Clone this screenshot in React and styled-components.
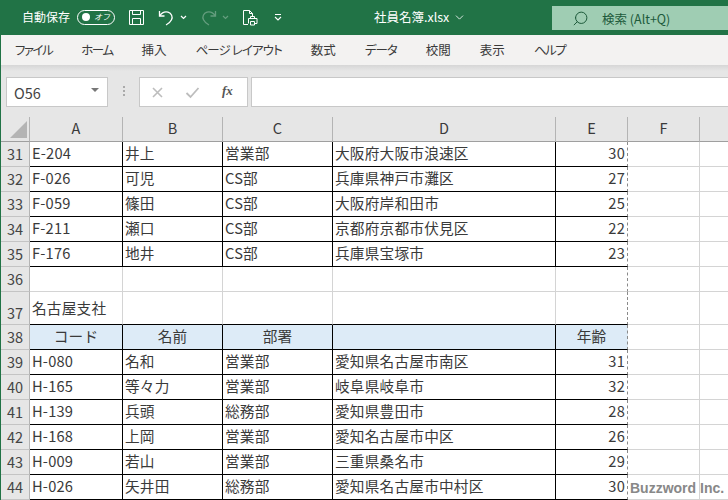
import React from 'react';
import styled, { createGlobalStyle } from 'styled-components';
import { Search, ChevronDown } from 'lucide-react';

const Global = createGlobalStyle`
  html, body { margin: 0; padding: 0; background: #fff; }
  body { font-family: "Noto Sans CJK JP", "Liberation Sans", sans-serif; color: #222; }
`;

const Page = styled.div`
  width: 728px;
  height: 500px;
  overflow: hidden;
  position: relative;
  display: flex;
  flex-direction: column;
`;

const TitleBar = styled.div`
  height: 35px;
  flex: none;
  background: #217346;
  color: #fff;
  display: flex;
  align-items: center;
  padding-left: 22px;
`;

const AutoSave = styled.span`
  font-size: 12px;
  line-height: 16px;
  margin-top: -1px;
`;

const Toggle = styled.span`
  width: 38px;
  height: 15px;
  box-sizing: border-box;
  margin-left: 7px;
  margin-top: -1px;
  border: 1px solid #fff;
  border-radius: 8px;
  display: flex;
  align-items: center;
  padding-left: 4px;
  gap: 4px;
  &::before {
    content: "";
    width: 8px;
    height: 8px;
    background: #fff;
    border-radius: 50%;
  }
`;

const ToggleText = styled.span`
  font-size: 8px;
  line-height: 10px;
  font-style: italic;
`;

const QatIcon = styled.svg`
  flex: none;
  margin-left: ${p => p.$left}px;
  margin-top: -1px;
  opacity: ${p => p.$dim ? 0.3 : 1};
`;

const FileName = styled.span`
  margin-left: 92px;
  font-size: 12.5px;
  line-height: 16px;
  margin-top: -1px;
`;

const TitleChevron = styled(ChevronDown)`
  margin-left: 4px;
`;

const SearchBox = styled.div`
  margin-left: auto;
  width: 176px;
  height: 24px;
  margin-top: 1px;
  background: #9fcdb3;
  color: #1d5a3b;
  display: flex;
  align-items: center;
  padding-left: 20px;
  box-sizing: border-box;
  font-size: 12.5px;
  gap: 13px;
`;

const Body = styled.div`
  flex: 1;
  display: flex;
  flex-direction: column;
  border-left: 1px solid #217346;
  min-height: 0;
`;

const Tabs = styled.div`
  height: 30px;
  flex: none;
  box-sizing: border-box;
  background: #f3f2f1;
  display: flex;
  align-items: center;
  gap: 29px;
  padding-left: 14px;
`;

const Tab = styled.span`
  font-size: 12.5px;
  line-height: 16px;
  color: #3a3a3a;
  white-space: nowrap;
  font-feature-settings: "palt";
  letter-spacing: ${p => p.$squeeze || 0}px;
`;

const FormulaBar = styled.div`
  height: 52px;
  flex: none;
  box-sizing: border-box;
  background: linear-gradient(#d6d6d6 0, #e6e6e6 6px);
  display: flex;
  padding: 12px 0 10px 5px;
`;

const NameBox = styled.div`
  width: 102px;
  box-sizing: border-box;
  background: #fff;
  border: 1px solid #c8c8c8;
  display: flex;
  align-items: center;
  justify-content: space-between;
  padding: 0 8px 0 7px;
  font-size: 14.5px;
  color: #444;
  &::after {
    content: "";
    border-left: 4px solid transparent;
    border-right: 4px solid transparent;
    border-top: 4px solid #777;
    margin-top: -4px;
  }
`;

const Grip = styled.div`
  width: 31px;
  display: flex;
  flex-direction: column;
  align-items: center;
  justify-content: center;
  gap: 2px;
  margin-top: -2px;
  i {
    width: 2px;
    height: 2px;
    background: #aaa;
  }
`;

const FnGroup = styled.div`
  width: 109px;
  box-sizing: border-box;
  background: #fff;
  border: 1px solid #c8c8c8;
  display: flex;
  align-items: center;
  padding-left: 11px;
  gap: 21px;
`;

const FxLabel = styled.span`
  font-family: "Liberation Serif", serif;
  font-style: italic;
  font-weight: bold;
  font-size: 13px;
  color: #555;
  margin-left: 1px;
  margin-top: -3px;
`;

const FormulaInput = styled.div`
  flex: 1;
  margin-left: 3px;
  background: #fff;
  border: 1px solid #c8c8c8;
  border-right: 0;
`;

const Row = styled.div`
  display: grid;
  grid-template-columns: 29px 93px 100px 110px 223px 72px 72px 1fr;
  height: ${p => p.$h || 25}px;
  flex: none;
`;

const ColHead = styled.div`
  background: #e6e6e6;
  box-sizing: border-box;
  border-right: 1px solid #b4b4b4;
  border-bottom: 1px solid #9f9f9f;
  font-size: 14.5px;
  line-height: 22px;
  color: #3a3a3a;
  text-align: center;
  &:last-child { border-right: 0; }
`;

const Corner = styled.div`
  background: #e6e6e6;
  box-sizing: border-box;
  border-right: 1px solid #b4b4b4;
  border-bottom: 1px solid #9f9f9f;
  display: flex;
  align-items: flex-end;
  justify-content: flex-end;
  padding: 0 2px 3px 0;
`;

const RowNum = styled.div`
  background: #e6e6e6;
  box-sizing: border-box;
  border-right: 1px solid #b4b4b4;
  border-bottom: 1px solid #c4c4c4;
  font-size: 14.5px;
  line-height: 22px;
  color: #444;
  text-align: center;
  display: flex;
  align-items: ${p => p.$tall ? 'flex-end' : 'center'};
  justify-content: center;
`;

const Cell = styled.div`
  box-sizing: border-box;
  border-right: ${p => p.$dashed ? '1px dashed #8a8a8a' : `1px solid ${p.$right ? '#000' : '#d4d4d4'}`};
  border-bottom: 1px solid ${p => p.$bottom ? '#000' : '#d4d4d4'};
  background: ${p => p.$head ? '#ddebf7' : '#fff'};
  font-size: 14.67px;
  letter-spacing: 0.2px;
  line-height: ${p => p.$line || 22}px;
  color: #3a3a3a;
  padding: 0 2px 0 2px;
  white-space: nowrap;
  overflow: hidden;
  text-align: ${p => p.$align || 'left'};
  &:last-child { border-right: 0; }
`;

const Watermark = styled.div`
  position: absolute;
  left: 630px;
  top: 478px;
  font-family: "Liberation Sans", sans-serif;
  font-weight: bold;
  font-size: 14px;
  line-height: 20px;
  color: #888;
  white-space: nowrap;
`;

const upper = [
  [31, 'E-204', '井上', '営業部', '大阪府大阪市浪速区', 30],
  [32, 'F-026', '可児', 'CS部', '兵庫県神戸市灘区', 27],
  [33, 'F-059', '篠田', 'CS部', '大阪府岸和田市', 25],
  [34, 'F-211', '瀬口', 'CS部', '京都府京都市伏見区', 22],
  [35, 'F-176', '地井', 'CS部', '兵庫県宝塚市', 23],
];

const lower = [
  [39, 'H-080', '名和', '営業部', '愛知県名古屋市南区', 31],
  [40, 'H-165', '等々力', '営業部', '岐阜県岐阜市', 32],
  [41, 'H-139', '兵頭', '総務部', '愛知県豊田市', 28],
  [42, 'H-168', '上岡', '営業部', '愛知名古屋市中区', 26],
  [43, 'H-009', '若山', '営業部', '三重県桑名市', 29],
  [44, 'H-026', '矢井田', '総務部', '愛知県名古屋市中村区', 30],
];

const tabs = [
  ['ファイル', -1.5],
  ['ホーム', -1.5],
  ['挿入', 0],
  ['ページ レイアウト', -0.9],
  ['数式', 0],
  ['データ', -1],
  ['校閲', 0],
  ['表示', 0],
  ['ヘルプ', -1.5],
];

function DataRow({ data }) {
  const [num, code, name, dept, addr, age] = data;
  return (
    <Row>
      <RowNum>{num}</RowNum>
      <Cell $right $bottom>{code}</Cell>
      <Cell $right $bottom>{name}</Cell>
      <Cell $right $bottom>{dept}</Cell>
      <Cell $right $bottom>{addr}</Cell>
      <Cell $dashed $bottom $align="right">{age}</Cell>
      <Cell />
      <Cell />
    </Row>
  );
}

function QatChevron({ left, dim }) {
  return (
    <QatIcon $left={left} $dim={dim} width="7" height="5" viewBox="0 0 7 5" fill="none" stroke="#fff" strokeWidth="1.2">
      <path d="M1 1l2.5 2.5L6 1" />
    </QatIcon>
  );
}

export default function App() {
  return (
    <Page>
      <Global />
      <TitleBar>
        <AutoSave>自動保存</AutoSave>
        <Toggle><ToggleText>オフ</ToggleText></Toggle>
        <QatIcon $left={13} width="17" height="17" viewBox="0 0 17 17" fill="none" stroke="#fff" strokeWidth="1">
          <path d="M1.5 1.5h14v14h-14z" />
          <path d="M4.5 1.5v4h8v-4M4.5 15.5v-6h8v6" />
        </QatIcon>
        <QatIcon $left={13} width="17" height="17" viewBox="0 0 17 17" fill="none" stroke="#fff" strokeWidth="1.3">
          <path d="M1.500 2v5h5" />
          <path d="M1.800 6.800C4 3.500 7 2.500 10 3.200c3.500.9 5 4.500 3.500 7.500-1 2-2.800 4-5.500 5.300" />
        </QatIcon>
        <QatChevron left={5} />
        <QatIcon $left={13} $dim width="17" height="17" viewBox="0 0 17 17" fill="none" stroke="#fff" strokeWidth="1.3">
          <path d="M15.500 2v5h-5" />
          <path d="M15.200 6.800C13 3.500 10 2.500 7 3.200c-3.500.9-5 4.500-3.500 7.500 1 2 2.800 4 5.500 5.300" />
        </QatIcon>
        <QatChevron left={5} dim />
        <QatIcon $left={13} width="16" height="17" viewBox="0 0 16 17" fill="none" stroke="#fff" strokeWidth="1">
          <path d="M6 15.500H1.500v-14h6l3 3v3" />
          <path d="M7.500 1.500v3h3" />
          <path d="M8.500 9.500v-2h4v2M6.500 14.500v-5h8.500v5h-2M8.500 12.500h4v3.500h-4z" />
        </QatIcon>
        <QatIcon $left={16} width="8" height="8" viewBox="0 0 8 8" fill="none" stroke="#fff" strokeWidth="1.100">
          <path d="M1 1.500h6M1 4l3 3 3-3" />
        </QatIcon>
        <FileName>社員名簿.xlsx</FileName>
        <TitleChevron size={13} strokeWidth={1.5} />
        <SearchBox>
          <Search size={17} strokeWidth={1.4} style={{ transform: 'scaleX(-1)' }} />
          <span>検索 (Alt+Q)</span>
        </SearchBox>
      </TitleBar>
      <Body>
        <Tabs>
          {tabs.map(([label, squeeze]) => <Tab key={label} $squeeze={squeeze}>{label}</Tab>)}
        </Tabs>
        <FormulaBar>
          <NameBox>O56</NameBox>
          <Grip><i /><i /><i /></Grip>
          <FnGroup>
            <svg width="13" height="13" viewBox="0 0 13 13" fill="none" stroke="#bdbdbd" strokeWidth="1.600">
              <path d="M2 2l9 9M11 2l-9 9" />
            </svg>
            <svg width="15" height="13" viewBox="0 0 15 13" fill="none" stroke="#bdbdbd" strokeWidth="1.800">
              <path d="M1.500 7l4 4 8-9" />
            </svg>
            <FxLabel>fx</FxLabel>
          </FnGroup>
          <FormulaInput />
        </FormulaBar>
        <Row>
          <Corner>
            <svg width="17" height="17" viewBox="0 0 17 17"><path d="M17 0v17H0z" fill="#b4b4b4" /></svg>
          </Corner>
          {['A', 'B', 'C', 'D', 'E', 'F', ''].map(c => <ColHead key={c}>{c}</ColHead>)}
        </Row>
        {upper.map(d => <DataRow key={d[0]} data={d} />)}
        <Row>
          <RowNum>36</RowNum>
          <Cell /><Cell /><Cell /><Cell /><Cell $dashed /><Cell /><Cell />
        </Row>
        <Row $h={33}>
          <RowNum $tall>37</RowNum>
          <Cell $bottom $line={32}>名古屋支社</Cell>
          <Cell $bottom /><Cell $bottom /><Cell $bottom /><Cell $bottom $dashed /><Cell /><Cell />
        </Row>
        <Row>
          <RowNum>38</RowNum>
          <Cell $head $right $bottom $align="center">コード</Cell>
          <Cell $head $right $bottom $align="center">名前</Cell>
          <Cell $head $right $bottom $align="center">部署</Cell>
          <Cell $head $right $bottom />
          <Cell $head $dashed $bottom $align="center">年齢</Cell>
          <Cell /><Cell />
        </Row>
        {lower.map(d => <DataRow key={d[0]} data={d} />)}
      </Body>
      <Watermark>Buzzword Inc.</Watermark>
    </Page>
  );
}
